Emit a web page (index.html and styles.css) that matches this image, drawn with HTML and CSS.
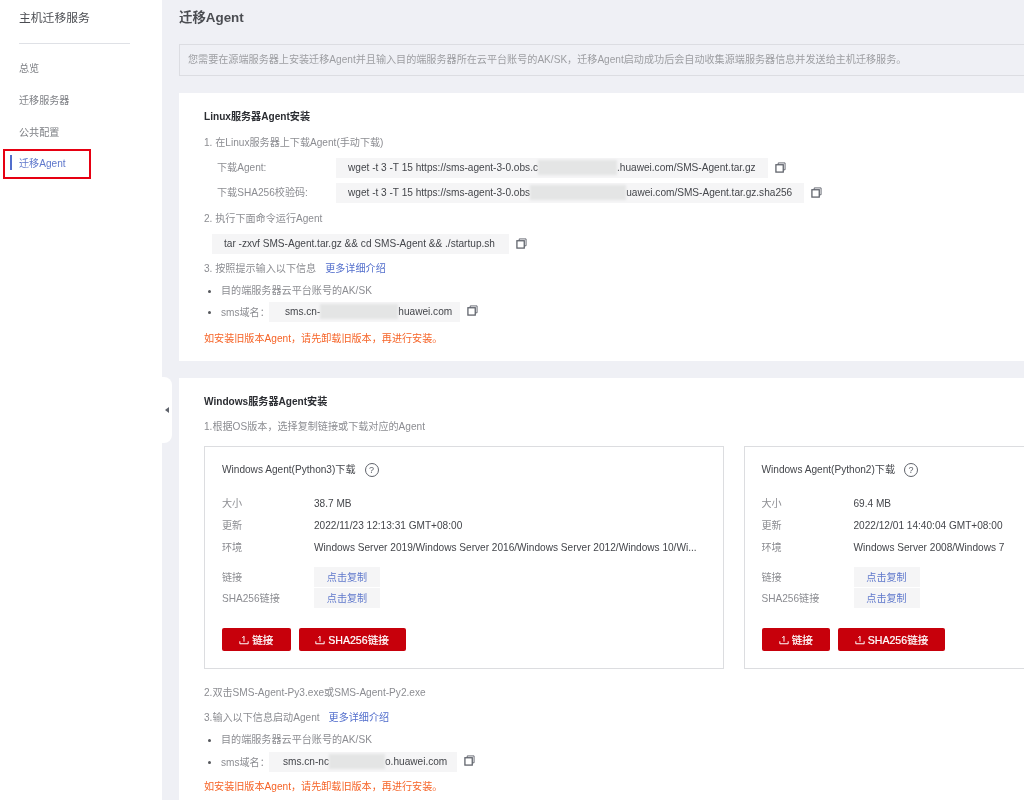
FILE: index.html
```html
<!DOCTYPE html>
<html lang="zh-CN">
<head>
<meta charset="utf-8">
<title>迁移Agent</title>
<link rel="stylesheet" href="styles.css">
</head>
<body>
<svg class="defs" width="0" height="0" aria-hidden="true">
  <symbol id="copy" viewBox="0 0 12 12">
    <path d="M3.5 3V1h7.5v7.5H9" fill="none" stroke="#5f636b" stroke-width="1"/>
    <rect x="1" y="3" width="8" height="8" fill="none" stroke="#5f636b" stroke-width="1.4"/>
  </symbol>
  <symbol id="dl" viewBox="0 0 12 12">
    <path d="M1 7.5v3h10v-3M6 8V1.5M4 3.4 6 1.4" fill="none" stroke="#fff" stroke-width="1.2"/>
  </symbol>
</svg>
<aside class="sidebar">
  <h2 class="side-title">主机迁移服务</h2>
  <nav class="nav">
    <a class="nav-item">总览</a>
    <a class="nav-item">迁移服务器</a>
    <a class="nav-item">公共配置</a>
    <a class="nav-item active">迁移Agent</a>
  </nav>
</aside>
<div class="handle"><span class="tri"></span></div>
<main class="main">
  <h1 class="page-title">迁移Agent</h1>
  <div class="notice">您需要在源端服务器上安装迁移Agent并且输入目的端服务器所在云平台账号的AK/SK，迁移Agent启动成功后会自动收集源端服务器信息并发送给主机迁移服务。</div>

  <section class="card card-linux">
    <h3 class="card-title">Linux服务器Agent安装</h3>
    <p class="step s1">1. 在Linux服务器上下载Agent(手动下载)</p>
    <div class="row r-first">
      <span class="row-label">下载Agent:</span>
      <code class="cmd">wget -t 3 -T 15 https://sms-agent-3-0.obs.c<i class="redact w1"></i>.huawei.com/SMS-Agent.tar.gz</code>
      <svg class="copy"><use href="#copy"/></svg>
    </div>
    <div class="row r-second">
      <span class="row-label">下载SHA256校验码:</span>
      <code class="cmd">wget -t 3 -T 15 https://sms-agent-3-0.obs<i class="redact w2"></i>uawei.com/SMS-Agent.tar.gz.sha256</code>
      <svg class="copy"><use href="#copy"/></svg>
    </div>
    <p class="step s2">2. 执行下面命令运行Agent</p>
    <div class="row r-tar">
      <code class="cmd cmd-tar">tar -zxvf SMS-Agent.tar.gz &amp;&amp; cd SMS-Agent &amp;&amp; ./startup.sh</code>
      <svg class="copy"><use href="#copy"/></svg>
    </div>
    <p class="step s3">3. 按照提示输入以下信息<a class="link">更多详细介绍</a></p>
    <ul class="bullets">
      <li class="b-item">目的端服务器云平台账号的AK/SK</li>
      <li class="b-item b-sms">
        <span class="sms-label">sms域名：</span>
        <code class="cmd sms">sms.cn-<i class="redact w3"></i>huawei.com</code>
        <svg class="copy"><use href="#copy"/></svg>
      </li>
    </ul>
    <p class="warn">如安装旧版本Agent，请先卸载旧版本，再进行安装。</p>
  </section>

  <section class="card card-win">
    <h3 class="card-title">Windows服务器Agent安装</h3>
    <p class="step s-win">1.根据OS版本，选择复制链接或下载对应的Agent</p>
    <div class="boxes">
      <article class="box">
        <div class="box-title">Windows Agent(Python3)下载<span class="help">?</span></div>
        <dl class="info">
          <div class="info-row"><dt>大小</dt><dd>38.7 MB</dd></div>
          <div class="info-row"><dt>更新</dt><dd>2022/11/23 12:13:31 GMT+08:00</dd></div>
          <div class="info-row"><dt>环境</dt><dd>Windows Server 2019/Windows Server 2016/Windows Server 2012/Windows 10/Wi...</dd></div>
        </dl>
        <div class="links">
          <div class="link-row"><span class="link-label">链接</span><a class="copy-btn">点击复制</a></div>
          <div class="link-row"><span class="link-label">SHA256链接</span><a class="copy-btn">点击复制</a></div>
        </div>
        <div class="btns">
          <a class="btn b-a"><svg class="dl"><use href="#dl"/></svg>链接</a>
          <a class="btn b-b"><svg class="dl"><use href="#dl"/></svg>SHA256链接</a>
        </div>
      </article>
      <article class="box">
        <div class="box-title">Windows Agent(Python2)下载<span class="help">?</span></div>
        <dl class="info">
          <div class="info-row"><dt>大小</dt><dd>69.4 MB</dd></div>
          <div class="info-row"><dt>更新</dt><dd>2022/12/01 14:40:04 GMT+08:00</dd></div>
          <div class="info-row"><dt>环境</dt><dd>Windows Server 2008/Windows 7</dd></div>
        </dl>
        <div class="links">
          <div class="link-row"><span class="link-label">链接</span><a class="copy-btn">点击复制</a></div>
          <div class="link-row"><span class="link-label">SHA256链接</span><a class="copy-btn">点击复制</a></div>
        </div>
        <div class="btns">
          <a class="btn b-a"><svg class="dl"><use href="#dl"/></svg>链接</a>
          <a class="btn b-b"><svg class="dl"><use href="#dl"/></svg>SHA256链接</a>
        </div>
      </article>
    </div>
    <p class="step s-w2">2.双击SMS-Agent-Py3.exe或SMS-Agent-Py2.exe</p>
    <p class="step s-w3">3.输入以下信息启动Agent<a class="link">更多详细介绍</a></p>
    <ul class="bullets">
      <li class="b-item">目的端服务器云平台账号的AK/SK</li>
      <li class="b-item b-sms b-sms-win">
        <span class="sms-label">sms域名：</span>
        <code class="cmd sms2">sms.cn-nc<i class="redact w4"></i>o.huawei.com</code>
        <svg class="copy"><use href="#copy"/></svg>
      </li>
    </ul>
    <p class="warn warn-win">如安装旧版本Agent，请先卸载旧版本，再进行安装。</p>
  </section>
</main>
</body>
</html>
```

FILE: styles.css
```css
* { box-sizing: border-box; }
html, body { margin: 0; padding: 0; height: 800px; overflow: hidden; }
html { background: #eff0f5; }
body {
  display: flex;
  position: relative;
  width: 1024px;
  background: #eff0f5;
  font-family: "Liberation Sans", "Noto Sans CJK SC", sans-serif;
  font-size: 10.1px;
  line-height: 16px;
  color: #8c8d92;
  filter: blur(0.25px);
}
.defs { position: absolute; }
p, h1, h2, h3, ul, dl, dd { margin: 0; padding: 0; }

.sidebar { flex: none; width: 162px; height: 800px; background: #fff; padding-left: 19px; }
.side-title { font-size: 11.8px; font-weight: 400; line-height: 18px; margin-top: 9px; color: #4b4d52; }
.nav { margin: 16px 0 0 -19px; padding-top: 9px; position: relative; display: flex; flex-direction: column; }
.nav::before { content: ""; position: absolute; left: 19px; top: 0; width: 111px; border-top: 1px solid #dfe1e6; }
.nav-item { height: 32px; line-height: 34px; padding-left: 19px; color: #7f8186; position: relative; }
.nav-item.active { color: #5f78cc; margin: 1px 0 0 3px; width: 87.5px; height: 30px; line-height: 25px; border: 2px solid #e60012; padding-left: 14px; }
.nav-item.active::before { content: ""; position: absolute; left: 5px; top: 4px; width: 2px; height: 15px; background: #526ecc; }

.handle { position: absolute; left: 162px; top: 377px; width: 10px; height: 66px; background: #fff; border-radius: 0 8px 8px 0; display: flex; align-items: center; justify-content: center; z-index: 2; }
.tri { width: 0; height: 0; border-style: solid; border-width: 3px 4px 3px 0; border-color: transparent #5f636b transparent transparent; margin-left: -1px; }

.main { flex: 1; min-width: 0; padding-left: 17px; height: 800px; overflow: hidden; }
.page-title { font-size: 13.4px; font-weight: 700; line-height: 18px; margin-top: 9px; color: #4b4d52; }
.notice { height: 32px; margin: 17px -2px 0 0; padding-left: 8px; line-height: 30px; border: 1px solid #dcdde2; color: #9d9ea2; white-space: nowrap; overflow: hidden; }

.card { background: #fff; padding: 15px 0 15px 25px; overflow: hidden; }
.card-linux { margin-top: 17px; }
.card-win { margin-top: 17px; height: 440px; }
.card-title { font-size: 10.1px; font-weight: 700; height: 16px; line-height: 18px; color: #2b2d32; }

.step { white-space: nowrap; height: 16px; line-height: 18px; }
.s1 { margin-top: 10px; }
.s2 { margin-top: 7px; }
.s3 { margin-top: 6px; }
.s-win { margin-top: 9px; }
.s-w2 { margin-top: 15px; }
.s-w3 { margin-top: 9px; }
.link { color: #526ecc; margin-left: 9px; }

.row { display: flex; align-items: center; }
.r-first { margin-top: 8px; padding-left: 13px; }
.r-second { margin-top: 5px; padding-left: 13px; }
.r-tar { margin-top: 8px; padding-left: 8px; }
.row-label { width: 119px; flex: none; }
.cmd {
  display: block;
  height: 20px;
  line-height: 20px;
  padding: 0 12px;
  background: #f5f5f6;
  font-family: "Liberation Sans", sans-serif;
  font-size: 10.1px;
  color: #44464b;
  white-space: nowrap;
}
.cmd-tar { padding-right: 14px; }
.copy { flex: none; width: 11px; height: 11px; margin: -2px 0 0 7px; }
.redact { display: inline-block; height: 15px; vertical-align: middle; background: #e4e5e5; filter: blur(1px); margin-top: -1px; }
.w1 { width: 79px; }
.w2 { width: 96px; }
.w3 { width: 78px; }
.w4 { width: 56px; }

.bullets { list-style: none; margin-top: 6px; }
.b-item { position: relative; padding: 2px 0 0 17px; height: 16px; line-height: 16px; display: flex; align-items: center; white-space: nowrap; }
.b-item::before { content: ""; position: absolute; left: 4px; top: 8px; width: 3px; height: 3px; border-radius: 50%; background: #55575c; }
.b-sms { margin-top: 4px; height: 19px; padding-top: 0; }
.b-sms-win { margin-top: 5px; }
.b-sms::before { top: 9px; }
.sms-label { width: 48px; flex: none; padding-top: 2px; }
.sms { width: 191px; padding-left: 16px; }
.sms2 { width: 188px; padding-left: 14px; }
.warn { margin-top: 9px; height: 16px; line-height: 18px; color: #f66428; white-space: nowrap; }
.warn-win { margin-top: 7px; }

.boxes { display: flex; gap: 19.5px; margin-top: 12px; }
.box { flex: none; width: 520px; height: 223px; border: 1px solid #dcdde0; padding: 14px 17px 0; }
.box-title { height: 18px; line-height: 20px; color: #44464b; display: flex; align-items: center; white-space: nowrap; }
.help { flex: none; width: 14px; height: 14px; margin-left: 9px; border: 1px solid #5f636b; border-radius: 50%; text-align: center; line-height: 12px; font-size: 9px; color: #5f636b; }
.info { margin-top: 15px; }
.info-row { display: flex; height: 22px; line-height: 16px; padding-top: 2px; }
.info dt { width: 92px; flex: none; }
.info dd { color: #44464b; min-width: 0; white-space: nowrap; }
.links { margin-top: 7px; display: flex; flex-direction: column; gap: 1px; }
.link-row { display: flex; align-items: center; height: 20px; }
.link-label { width: 92px; flex: none; padding-top: 2px; }
.copy-btn { width: 66px; height: 20px; line-height: 22px; background: #f5f5f6; color: #5f78cc; text-align: center; }
.btns { display: flex; gap: 8px; margin-top: 20px; }
.btn { height: 23px; background: #c7000b; border-radius: 2px; color: #fff; display: flex; align-items: center; justify-content: center; font-size: 10.6px; white-space: nowrap; -webkit-text-stroke: 0.2px #fff; }
.b-a { width: 68.5px; }
.b-b { width: 107px; }
.dl { width: 10px; height: 10px; margin-right: 3px; flex: none; }
```
